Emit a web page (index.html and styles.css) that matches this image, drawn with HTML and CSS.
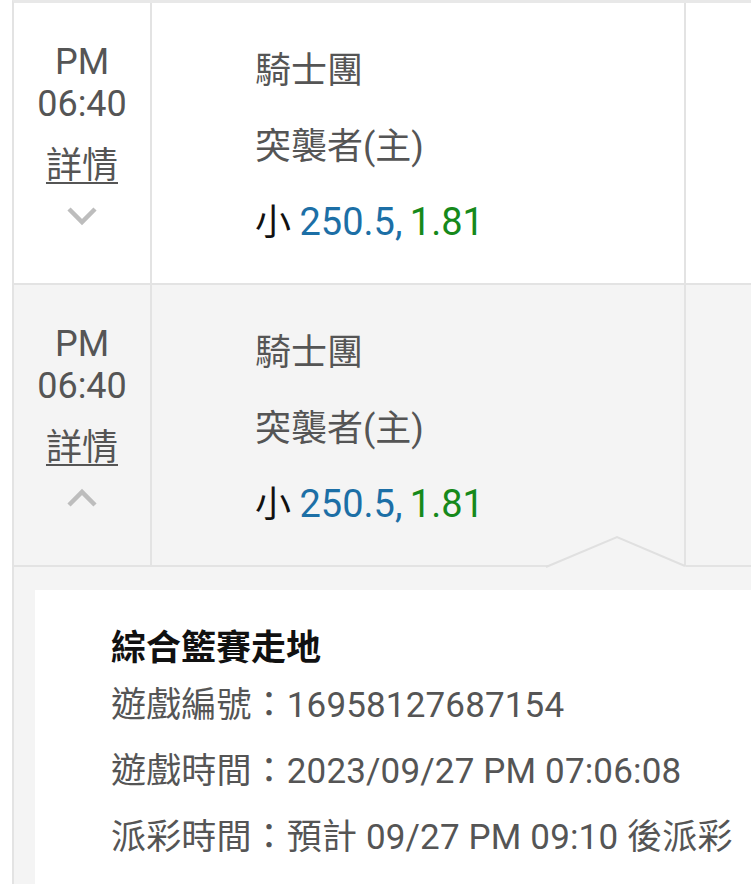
FILE: index.html
```html
<!DOCTYPE html>
<html lang="zh-Hant">
<head>
  <meta charset="UTF-8" />
  <meta name="viewport" content="width=device-width, initial-scale=1.0"/>
  <title>注單紀錄</title>
  <link rel="stylesheet" href="styles.css">
</head>
<body>

  <div class="bet-list">

    <div class="bet-row">
      <div class="cell time-cell">
        <div class="time">PM<br>06:40</div>
        <a class="detail-link" href="#">詳情</a>
        <svg class="chevron" width="32" height="20" viewBox="0 0 32 20">
          <polyline points="3,3 16,16 29,3" />
        </svg>
      </div>
      <div class="cell pick-cell">
        <div class="pick-line">騎士團</div>
        <div class="pick-line">突襲者(主)</div>
        <div class="pick-line odds"><span class="side">小</span> <span class="line-val">250.5,</span> <span class="price">1.81</span></div>
      </div>
      <div class="cell extra-cell"></div>
    </div>

    <div class="bet-row open">
      <div class="cell time-cell">
        <div class="time">PM<br>06:40</div>
        <a class="detail-link" href="#">詳情</a>
        <svg class="chevron" width="32" height="20" viewBox="0 0 32 20">
          <polyline points="3,17 16,4 29,17" />
        </svg>
      </div>
      <div class="cell pick-cell">
        <div class="pick-line">騎士團</div>
        <div class="pick-line">突襲者(主)</div>
        <div class="pick-line odds"><span class="side">小</span> <span class="line-val">250.5,</span> <span class="price">1.81</span></div>
      </div>
      <div class="cell extra-cell"></div>

      <!-- little arrow pointing at the opened row -->
      <svg class="caret" width="142" height="34" viewBox="0 0 142 34">
        <polygon points="0,34 1,32 72,2 140,31 142,34" />
        <polyline points="1,32 72,2 140,31" />
      </svg>
    </div>

    <div class="detail">
      <div class="detail-card">
        <div class="detail-title">綜合籃賽走地</div>
        <div class="detail-line">遊戲編號：16958127687154</div>
        <div class="detail-line">遊戲時間：2023/09/27 PM 07:06:08</div>
        <div class="detail-line">派彩時間：預計 09/27 PM 09:10 後派彩</div>
      </div>
    </div>

  </div>

</body>
</html>
```

FILE: styles.css
```css
body {
  margin: 0;
  background: #fff;
  font-family: Roboto, "Noto Sans CJK TC", sans-serif;
  color: #555;
  overflow: hidden;
}
.bet-list {
  margin-left: 12px;
  border-left: 2px solid #e3e3e3;
  border-top: 3px solid #e8e8e8;
}
.bet-row {
  display: grid;
  grid-template-columns: 138px 534px 1fr;
  height: 280px;
  border-bottom: 2px solid #e3e3e3;
  background: #fff;
}
.bet-row.open {
  position: relative;
  background: #f4f4f4;
}
.cell {
  border-right: 2px solid #e3e3e3;
}
.extra-cell {
  border-right: none;
}
.time-cell {
  text-align: center;
  padding-top: 38px;
  font-size: 36px;
  line-height: 42px;
}
.detail-link {
  display: inline-block;
  margin-top: 20px;
  color: #555;
  text-decoration: underline;
  text-underline-offset: 4px;
  text-decoration-thickness: 2px;
}
.chevron {
  display: block;
  margin: 19px auto 0;
}
.chevron polyline {
  fill: none;
  stroke: #bdbdbd;
  stroke-width: 4.5;
}
.pick-cell {
  padding: 47px 0 0 103px;
  font-size: 36px;
  line-height: 42px;
}
.pick-line {
  margin-bottom: 34px;
}
.pick-line.odds {
  margin-top: -1px;
  font-size: 38px;
}
.side {
  color: #111;
  font-size: 36px;
}
.line-val {
  color: #1c6fa6;
  margin-left: -1px;
}
.price {
  color: #16891b;
  margin-left: -2px;
}
.caret {
  position: absolute;
  left: 531px;
  top: 250px;
}
.caret polygon {
  fill: #f4f4f4;
}
.caret polyline {
  fill: none;
  stroke: #e0e0e0;
  stroke-width: 2;
}
.detail {
  background: #f4f4f4;
  padding: 23px 0 0 21px;
}
.detail-card {
  background: #fff;
  padding: 38px 0 13px 76px;
  font-size: 35px;
}
.detail-title {
  color: #111;
  font-weight: bold;
  line-height: 42px;
  margin-bottom: 3px;
}
.detail-line {
  line-height: 66px;
  letter-spacing: 0.15px;
  white-space: nowrap;
}
```
